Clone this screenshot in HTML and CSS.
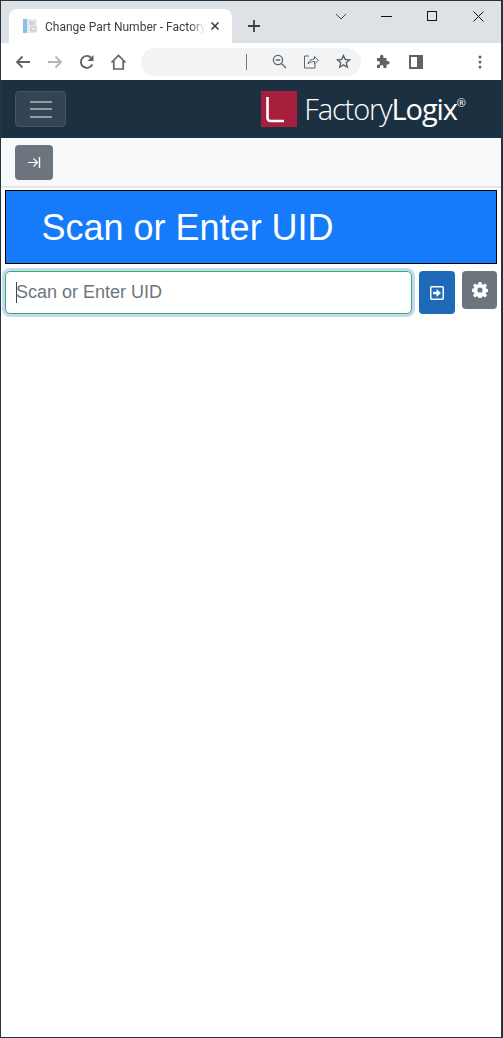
FILE: index.html
```html
<!DOCTYPE html>
<html lang="en">
<head>
<meta charset="utf-8">
<title>Change Part Number - FactoryLogix</title>
<link rel="stylesheet" href="styles.css">
</head>
<body>
<div class="window">
  <div class="tabstrip">
    <div class="tab">
      <svg class="favicon" width="16" height="16" viewBox="0 0 16 16"><rect x="1" y="1" width="4" height="14" fill="#8cc0e8"/><rect x="5" y="1" width="10" height="14" fill="#e8eaee"/><path d="M7 4h6M7 6h6M9 9h5v4H9z" stroke="#bcc1ca" fill="none"/></svg>
      <span class="tab-title">Change Part Number - Factory</span>
      <svg class="tab-close" width="10" height="10" viewBox="0 0 10 10"><path d="M1.500 1.500l7 7M8.500 1.500l-7 7" stroke="#3c4043" stroke-width="1.600"/></svg>
    </div>
    <svg class="newtab" width="12" height="12" viewBox="0 0 12 12"><path d="M6 0v12M0 6h12" stroke="#3c4043" stroke-width="1.800"/></svg>
    <div class="winctl">
      <svg class="ctl-chevron" width="12" height="7" viewBox="0 0 12 7"><path d="M1 1l5 5 5-5" fill="none" stroke="#3c4043"/></svg>
      <svg class="ctl-min" width="11" height="1" viewBox="0 0 11 1"><rect width="11" height="1" fill="#111"/></svg>
      <svg class="ctl-max" width="10" height="10" viewBox="0 0 10 10"><rect x=".5" y=".5" width="9" height="9" fill="none" stroke="#111"/></svg>
      <svg class="ctl-close" width="11" height="11" viewBox="0 0 11 11"><path d="M.5.500l10 10M10.500.500l-10 10" stroke="#111"/></svg>
    </div>
  </div>
  <div class="toolbar">
    <svg class="tb-back" width="16" height="14" viewBox="0 0 16 14"><path d="M15 7H2M7.500 1.500L2 7l5.500 5.500" fill="none" stroke="#5f6368" stroke-width="1.800"/></svg>
    <svg class="tb-forward" width="16" height="14" viewBox="0 0 16 14"><path d="M1 7h13M8.500 1.500L14 7l-5.500 5.500" fill="none" stroke="#b4b6b9" stroke-width="1.800"/></svg>
    <svg class="tb-reload" width="16" height="16" viewBox="0 0 16 16"><path d="M13.300 10.500A6 6 0 1 1 12.300 3.800" fill="none" stroke="#5f6368" stroke-width="1.900"/><path d="M14.500 1v6h-6z" fill="#5f6368"/></svg>
    <svg class="tb-home" width="17" height="16" viewBox="0 0 17 16"><path d="M1.500 8.500l7-7 7 7M3.800 7v8h9.400V7" fill="none" stroke="#5f6368" stroke-width="1.700"/></svg>
    <div class="omnibox">
      <span class="omni-sep"></span>
      <svg class="omni-zoom" width="15" height="15" viewBox="0 0 15 15"><circle cx="6" cy="6" r="4.600" fill="none" stroke="#5f6368" stroke-width="1.300"/><path d="M9.500 9.500l4.500 4.500M3.800 6h4.400" stroke="#5f6368" stroke-width="1.300"/></svg>
      <svg class="omni-share" width="16" height="15" viewBox="0 0 16 15"><path d="M6 2H1.500v12h10.500V10" fill="none" stroke="#5f6368"/><path d="M5 10c.5-3.500 3-5 6.500-5V2.500l4 3.800-4 3.700V7.500C9 7.500 6.800 8 5 10z" fill="none" stroke="#5f6368"/></svg>
      <svg class="omni-star" width="15" height="15" viewBox="0 0 15 15"><path d="M7.500 1.500l1.800 4 4.300.4-3.300 2.900 1 4.300-3.800-2.300-3.800 2.300 1-4.300L1.400 5.900l4.300-.4z" fill="none" stroke="#5f6368" stroke-width="1.400"/></svg>
    </div>
    <svg class="tb-ext" width="15" height="15" viewBox="0 0 15 15"><path d="M1 4h3V2.500a1.700 1.700 0 0 1 3.400 0V4h3.100v3h1.300a1.800 1.800 0 0 1 0 3.600h-1.300V14H7.500v-1.300a1.800 1.800 0 0 0-3.600 0V14H1v-3.200h1a1.900 1.900 0 0 0 0-3.800H1z" fill="#5f6368"/></svg>
    <svg class="tb-side" width="14" height="14" viewBox="0 0 14 14"><path d="M0 0h14v14H0zM2 2v10h6V2z" fill="#5f6368" fill-rule="evenodd"/></svg>
    <svg class="tb-menu" width="4" height="14" viewBox="0 0 4 14"><circle cx="2" cy="2" r="1.500" fill="#5f6368"/><circle cx="2" cy="7" r="1.500" fill="#5f6368"/><circle cx="2" cy="12" r="1.500" fill="#5f6368"/></svg>
  </div>
  <main class="page">
    <nav class="navbar">
      <button class="hamburger" type="button" aria-label="Toggle navigation">
        <span class="bar"></span><span class="bar"></span><span class="bar"></span>
      </button>
      <div class="brand">
        <svg class="brand-mark" width="36" height="36" viewBox="0 0 36 36"><rect width="36" height="36" fill="#a81e3d"/><path d="M6.500 6v21a3 3 0 0 0 3 3H23" fill="none" stroke="#fff" stroke-width="2.600"/></svg>
        <span class="brand-name"><span class="brand-light">Factory</span><span class="brand-bold">Logix</span><sup class="brand-reg">®</sup></span>
      </div>
    </nav>
    <div class="subbar">
      <button class="btn-collapse" type="button" aria-label="Expand">
        <svg width="13" height="11" viewBox="0 0 13 11"><path d="M0 5.500h9M5.500 1.500L9.500 5.500l-4 4" fill="none" stroke="#fff" stroke-width="1.200"/><path d="M11.500 0v11" stroke="#fff" stroke-width="1.400"/></svg>
      </button>
    </div>
    <h1 class="banner">Scan or Enter UID</h1>
    <form class="scan-row">
      <div class="scan-input"><span class="caret"></span><span class="placeholder">Scan or Enter UID</span></div>
      <button class="btn-go" type="button" aria-label="Submit">
        <svg width="14" height="14" viewBox="0 0 14 14"><rect x=".75" y=".75" width="12.500" height="12.500" rx="1" fill="none" stroke="#fff" stroke-width="1.500"/><path d="M3 5.700h3.500V3l4.500 4-4.500 4V8.300H3z" fill="#fff"/></svg>
      </button>
      <button class="btn-gear" type="button" aria-label="Settings">
        <svg width="16" height="16" viewBox="0 0 16 16"><path fill="#fff" fill-rule="evenodd" d="M6.600 0h2.800l.4 2.200 1.300.6 1.900-1.300 2 2-1.300 1.900.6 1.300 2.200.4v2.800l-2.200.4-.6 1.300 1.300 1.900-2 2-1.900-1.300-1.300.6-.4 2.200H6.600l-.4-2.200-1.300-.6L3 15.500l-2-2 1.300-1.900-.6-1.300L-.5 9.900V6.900l2.200-.4.6-1.300L1 3.500l2-2 1.900 1.300 1.300-.6zM8 5.400a2.600 2.600 0 1 0 0 5.200 2.600 2.600 0 0 0 0-5.200z"/></svg>
      </button>
    </form>
  </main>
</div>
</body>
</html>
```

FILE: styles.css
```css
* { box-sizing: border-box; }
html, body { margin: 0; padding: 0; height: 100%; }
body { background: #2b2b2b; overflow: hidden; }

.window {
  display: flex;
  flex-direction: column;
  height: 1038px;
  width: 503px;
  border: 1px solid #27333d;
  border-right-width: 2px;
  background: #fff;
  font-family: "Liberation Sans", Arial, sans-serif;
}

/* Browser chrome */
.tabstrip {
  display: flex;
  align-items: flex-start;
  height: 42px;
  background: #dee1e6;
  flex: none;
}
.tab {
  display: flex;
  align-items: center;
  width: 223px;
  height: 34px;
  margin: 8px 0 0 8px;
  padding: 0 12px 0 13px;
  background: #fff;
  border-radius: 8px 8px 0 0;
}
.favicon { flex: none; }
.tab-title {
  margin: 1px 0 0 7px;
  white-space: nowrap;
  font: 12px Roboto, "Open Sans", sans-serif;
  color: #3c4043;
  -webkit-mask-image: linear-gradient(90deg, #000 90%, rgba(0,0,0,.05) 99%);
  mask-image: linear-gradient(90deg, #000 90%, rgba(0,0,0,.05) 99%);
}
.tab-close { margin-left: auto; flex: none; }
.newtab { margin: 19px 0 0 16px; flex: none; }
.winctl {
  display: flex;
  align-items: center;
  height: 30px;
  margin-left: auto;
  padding-right: 17px;
}
.ctl-chevron { margin-right: 34px; }
.ctl-min { margin-right: 35px; }
.ctl-max { margin-right: 36px; }

.toolbar {
  display: flex;
  align-items: center;
  height: 37px;
  flex: none;
  padding-left: 14px;
  background: #fff;
}
.tb-forward { margin-left: 16px; }
.tb-reload { margin-left: 16px; }
.tb-home { margin-left: 15px; }
.omnibox {
  display: flex;
  align-items: center;
  width: 220px;
  height: 28px;
  margin-left: 14px;
  padding-left: 105px;
  background: #f1f3f4;
  border-radius: 14px;
}
.omni-sep { width: 1px; height: 16px; background: #70757a; }
.omni-zoom { margin-left: 25px; }
.omni-share { margin-left: 16px; }
.omni-star { margin-left: 17px; }
.tb-ext { margin-left: 15px; }
.tb-side { margin-left: 18px; }
.tb-menu { margin-left: 55px; }

/* Page */
.page { flex: 1; display: flex; flex-direction: column; background: #fff; }

.navbar {
  display: flex;
  align-items: center;
  justify-content: space-between;
  height: 58px;
  flex: none;
  padding: 0 35px 0 14px;
  background: #1b3142;
}
.hamburger {
  display: flex;
  flex-direction: column;
  align-items: center;
  justify-content: center;
  gap: 5.500px;
  width: 51px;
  height: 36px;
  padding: 0;
  background: #334554;
  border: 1px solid #45565f;
  border-radius: 4px;
}
.bar { width: 22px; height: 2px; background: #8f9aa2; }
.brand { display: flex; align-items: center; gap: 7px; }
.brand-mark { flex: none; }
.brand-name { color: #fff; font: 29px/36px "Open Sans", "Noto Sans", sans-serif; letter-spacing: -1.100px; white-space: nowrap; }
.brand-light { font-weight: 300; }
.brand-bold { font-weight: 400; }
.brand-reg { font-size: 11px; vertical-align: 13px; line-height: 0; letter-spacing: 0; }

.subbar {
  display: flex;
  align-items: center;
  height: 50px;
  flex: none;
  padding-left: 14px;
  background: #f8f9fa;
  border-bottom: 2px solid #e4e6e9;
}
.btn-collapse {
  display: flex;
  align-items: center;
  justify-content: center;
  width: 38px;
  height: 35px;
  padding: 0;
  background: #6c757d;
  border: 0;
  border-radius: 4px;
}

.banner {
  height: 74px;
  margin: 2px 4px 0;
  padding-left: 35.500px;
  background: #157bfb;
  border: 1px solid #000;
  color: #fff;
  font-size: 36px;
  font-weight: 400;
  line-height: 73px;
}

.scan-row {
  display: flex;
  align-items: flex-start;
  margin: 7px 0 0 4px;
}
.scan-input {
  display: flex;
  align-items: center;
  width: 407px;
  height: 43px;
  padding-left: 10px;
  background: #fff;
  border: 1px solid #3cae5a;
  border-radius: 5px;
  box-shadow: 0 0 0 3px #c2dcf8;
  font-size: 18px;
  color: #6c757d;
}
.caret { width: 1px; height: 21px; margin-right: -1px; background: #3c4a55; }
.btn-go {
  display: flex;
  align-items: center;
  justify-content: center;
  width: 36px;
  height: 43px;
  margin-left: 7px;
  padding: 0;
  background: #1e6ab8;
  border: 0;
  border-radius: 4px;
}
.btn-gear {
  display: flex;
  align-items: center;
  justify-content: center;
  width: 35px;
  height: 38px;
  margin-left: 7px;
  padding: 0;
  background: #6c757d;
  border: 0;
  border-radius: 4px;
}
```
